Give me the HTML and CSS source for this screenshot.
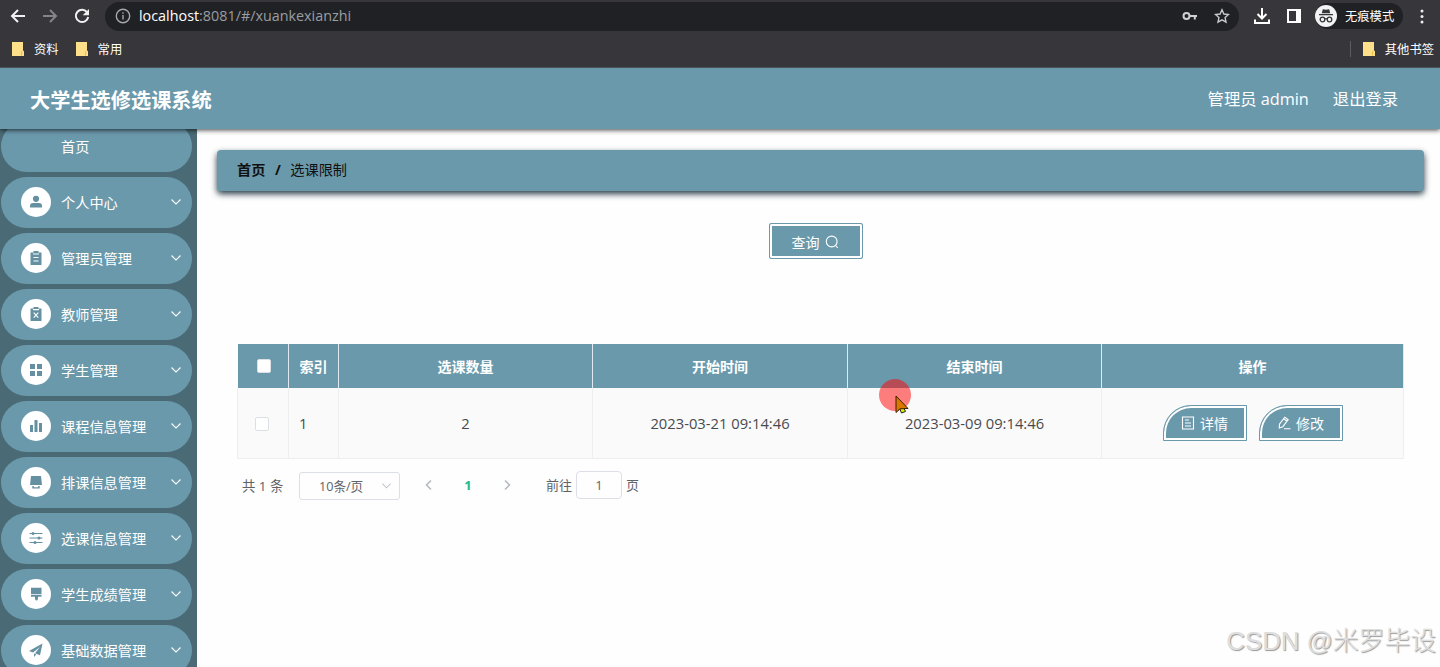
FILE: index.html
```html
<!DOCTYPE html>
<html lang="zh-CN">
<head>
<meta charset="utf-8">
<title>大学生选修选课系统</title>
<link rel="stylesheet" href="styles.css">
</head>
<body>
<svg class="defs" width="0" height="0"><defs>
<symbol id="down" viewBox="0 0 12 12"><path d="M1.500 3.500 6 8l4.500-4.500" fill="none" stroke="currentColor" stroke-width="1.100"/></symbol>
<symbol id="folder" viewBox="0 0 12 14"><path d="M0 0h11v9h1v5H0z" fill="#ffe08a"/><path d="M9.500 13.500V10l1.500-1.500" fill="none" stroke="#e9bd4c"/></symbol>
</defs></svg>
<div class="browser">
  <div class="toolbar">
    <svg class="nav" viewBox="0 0 16 16"><path d="M15 8H2M8 2 2 8l6 6" /></svg>
    <svg class="nav dim" viewBox="0 0 16 16"><path d="M1 8h13M8 2l6 6-6 6" /></svg>
    <svg class="nav" viewBox="0 0 16 16"><path d="M13.300 4.500A6.200 6.200 0 1 0 14.200 9"/><path class="solid" d="M15 1v6.300H8.700z"/></svg>
    <div class="address">
      <svg class="info" viewBox="0 0 16 16"><circle cx="8" cy="8" r="6.700"/><path d="M8 7v4.500M8 4.200v1.600"/></svg>
      <span class="url"><b>localhost</b>:8081/#/xuankexianzhi</span>
      <svg class="key" viewBox="0 0 16 12"><circle cx="4.500" cy="6" r="3"/><path d="M7.500 6H15M12.800 6v3.500"/></svg>
      <svg class="star" viewBox="0 0 16 16"><path d="m8 1.800 1.900 4.200 4.600.5-3.400 3.100.9 4.500L8 11.800l-4 2.300.9-4.500L1.500 6.500 6.100 6z"/></svg>
    </div>
    <svg class="download" viewBox="0 0 18 18"><path d="M9 1v10M4.500 7 9 11.500 13.500 7M2 12.500V16h14v-3.500"/></svg>
    <svg class="panel" viewBox="0 0 14 14"><path d="M1 1h12v12H1z" fill="none" stroke="#fff" stroke-width="2"/><path d="M9 1h4v12H9z" fill="#fff"/></svg>
    <div class="incognito">
      <svg viewBox="0 0 22 22"><circle cx="11" cy="11" r="11" fill="#f1f3f4"/><path d="m6.800 8.200 1-4 3.200.6 3.200-.6 1 4zM4 9h14v1.200H4z" fill="#35363a"/><g fill="none" stroke="#35363a" stroke-width="1.300"><circle cx="7.500" cy="14.500" r="2.300"/><circle cx="14.500" cy="14.500" r="2.300"/><path d="M9.800 14q1.200-.8 2.400 0"/></g></svg>
      <span>无痕模式</span>
    </div>
    <svg class="dots" viewBox="0 0 4 16"><circle cx="2" cy="3" r="1.500"/><circle cx="2" cy="8.500" r="1.500"/><circle cx="2" cy="14" r="1.500"/></svg>
  </div>
  <div class="bookmarks">
    <span class="mark"><svg><use href="#folder"/></svg>资料</span>
    <span class="mark"><svg><use href="#folder"/></svg>常用</span>
    <span class="mark other"><svg><use href="#folder"/></svg>其他书签</span>
  </div>
</div>
<header class="header">
  <h1>大学生选修选课系统</h1>
  <nav><span>管理员 admin</span><span>退出登录</span></nav>
</header>
<div class="layout">
  <aside class="sidebar">
    <div class="item home"><span class="label">首页</span></div>
    <div class="item"><span class="icon"><svg viewBox="0 0 14 14"><circle cx="7" cy="3.800" r="3.100"/><path d="M1 12.500V11q0-3 3-3h6q3 0 3 3v1.500z"/></svg></span><span class="label">个人中心</span><svg class="arrow"><use href="#down"/></svg></div>
    <div class="item"><span class="icon"><svg viewBox="0 0 14 14"><path d="M1.500 1.500h11V14h-11z"/><path d="M4.500 0h5v3h-5z"/><path class="cut" d="M4 3h6M4.500 6.500h5M4.500 10h5"/></svg></span><span class="label">管理员管理</span><svg class="arrow"><use href="#down"/></svg></div>
    <div class="item"><span class="icon"><svg viewBox="0 0 14 14"><path d="M1.500 1.500h11V14h-11z"/><path d="M4.500 0h5v2h-5z"/><path class="cut" d="M4 2.600h6M4.700 5.700l4.600 5M9.300 5.700l-4.600 5"/></svg></span><span class="label">教师管理</span><svg class="arrow"><use href="#down"/></svg></div>
    <div class="item"><span class="icon"><svg viewBox="0 0 14 14"><path d="M1 1h5v5H1zM8 1h5v5H8zM1 8h5v5H1zM8 8h5v5H8z"/></svg></span><span class="label">学生管理</span><svg class="arrow"><use href="#down"/></svg></div>
    <div class="item"><span class="icon"><svg viewBox="0 0 14 14"><path d="M1 6h3v7H1zM5.500 1h3v12h-3zM10 4h3v9h-3z"/></svg></span><span class="label">课程信息管理</span><svg class="arrow"><use href="#down"/></svg></div>
    <div class="item"><span class="icon"><svg viewBox="0 0 14 14"><path d="M2 1h10l1 9H1zM3.300 11h1.500v1.200h4.400V11h1.500v2.500H3.300z"/></svg></span><span class="label">排课信息管理</span><svg class="arrow"><use href="#down"/></svg></div>
    <div class="item"><span class="icon"><svg viewBox="0 0 14 14"><path d="M.5 2h13v1H.5zM.5 6.500h13v1H.5zM.5 11h13v1H.5z"/><circle cx="4" cy="2.500" r="1.500"/><circle cx="10" cy="7" r="1.500"/><circle cx="6" cy="11.500" r="1.500"/></svg></span><span class="label">选课信息管理</span><svg class="arrow"><use href="#down"/></svg></div>
    <div class="item"><span class="icon"><svg viewBox="0 0 14 14"><path d="M2 .7h10.500v6.600H2zM2 8h10.500v1.700H9V12q-1.500 3-3 0V9.700H2z"/></svg></span><span class="label">学生成绩管理</span><svg class="arrow"><use href="#down"/></svg></div>
    <div class="item"><span class="icon"><svg viewBox="0 0 14 14"><path d="M13.500.5 0 8l4 1.500L11 4 6 10.200l5 2zM5 10.500V14l2.300-2.600z"/></svg></span><span class="label">基础数据管理</span><svg class="arrow"><use href="#down"/></svg></div>
  </aside>
  <main class="main">
    <div class="crumbs"><b>首页</b><b class="slash">/</b><span>选课限制</span></div>
    <div class="search"><button class="query">查询<svg viewBox="0 0 14 14"><circle cx="6.700" cy="6.500" r="5.400"/><path d="m10.500 10.500 2.300 2.500"/></svg></button></div>
    <div class="table">
      <div class="row head"><div><i class="check"></i></div><div>索引</div><div>选课数量</div><div>开始时间</div><div>结束时间</div><div>操作</div></div>
      <div class="row body"><div><i class="check"></i></div><div class="index">1</div><div>2</div><div>2023-03-21 09:14:46</div><div>2023-03-09 09:14:46</div>
        <div class="ops">
          <button class="leaf"><svg viewBox="0 0 14 14"><path d="M1.500 1h11v12h-11zM4 4h4M4 7h6M4 10h6"/></svg>详情</button>
          <button class="leaf"><svg viewBox="0 0 14 14"><path d="m2.500 8.200 5.300-7 3.400 2.500-5.400 7-3.500 1.200zM6.700 2.800l3.300 2.500M7 12.800h6.500"/></svg>修改</button>
        </div>
      </div>
    </div>
    <div class="pager">
      <span class="total">共 1 条</span>
      <span class="size"><span>10条/页</span><svg><use href="#down"/></svg></span>
      <svg class="step" viewBox="0 0 12 12"><path d="M8 1.500 3.500 6 8 10.500"/></svg>
      <b>1</b>
      <svg class="step" viewBox="0 0 12 12"><path d="M4 1.500 8.500 6 4 10.500"/></svg>
      <span class="goto">前往</span><span class="page">1</span><span class="unit">页</span>
    </div>
  </main>
</div>
<svg class="pointer" viewBox="0 0 34 38"><circle cx="17" cy="17" r="16" fill="#ff0000" fill-opacity=".5"/><path d="m21.500 30 2 5 4-1.500-2.500-5" fill="#d8f000" stroke="#222"/><path d="M18 18v16.500l4-3.700 8-.3z" fill="#d97700" stroke="#3c1c00"/></svg>
<div class="watermark">CSDN @米罗毕设</div>
</body>
</html>
```
FILE: styles.css
```css
* { box-sizing: border-box; }
body { margin: 0; width: 1440px; height: 667px; overflow: hidden; position: relative; display: flex; flex-direction: column; background: #fefefe; font: 14px "Open Sans", "Noto Sans CJK SC", sans-serif; color: #505256; }
svg { flex: none; }
.defs { position: absolute; }
button { font: inherit; }

.browser { height: 68px; flex: none; background: #36363b; color: #fff; border-bottom: 1px solid #4c5359; }
.toolbar { height: 32px; display: flex; align-items: center; padding-left: 10px; }
.nav { width: 16px; height: 16px; margin-right: 16px; fill: none; stroke: #f1f1f1; stroke-width: 2; }
.nav.dim { stroke: #858589; }
.nav .solid { fill: #f1f1f1; stroke: none; }
.address { width: 1134px; height: 29px; margin-left: -1px; border-radius: 15px; background: #202124; display: flex; align-items: center; padding: 0 9px 0 10px; }
.info { width: 16px; height: 16px; fill: none; stroke: #a5a8ac; stroke-width: 1.4; }
.url { margin-left: 8px; flex: 1; font-size: 14.35px; color: #9a9da1; white-space: nowrap; padding-bottom: 1px; }
.url b { font-weight: 400; color: #fff; }
.key { width: 16px; height: 12px; fill: none; stroke: #cfd1d4; stroke-width: 2; margin-right: 16px; }
.star { width: 16px; height: 16px; fill: none; stroke: #c8cacd; stroke-width: 1.4; }
.download { width: 18px; height: 18px; margin-left: 14px; fill: none; stroke: #fff; stroke-width: 2; }
.panel { width: 14px; height: 14px; margin-left: 16px; }
.incognito { display: flex; align-items: center; width: 88px; height: 26px; margin-left: 14px; border-radius: 13px; background: #202124; font-size: 12.3px; }
.incognito svg { width: 22px; height: 22px; margin: 0 8px 0 0; }
.dots { width: 4px; height: 16px; margin-left: 17px; fill: #eee; }
.bookmarks { height: 34px; display: flex; align-items: center; padding: 0 6px 0 12px; font-size: 12.3px; }
.mark { display: flex; align-items: center; height: 16px; margin-right: 17px; }
.mark svg { width: 12px; height: 14px; margin-right: 10px; }
.mark.other { margin: 0 0 0 auto; border-left: 1px solid #5b5c60; padding-left: 12px; }

.header { height: 61px; flex: none; position: relative; z-index: 2; background: #6b99ac; box-shadow: 0 1px 5px rgba(0,0,0,.75); display: flex; align-items: center; justify-content: space-between; padding: 0 42px 0 30px; color: #fff; }
.browser { position: relative; z-index: 3; }
.header h1 { margin: 0; font-size: 20.2px; line-height: 30px; font-weight: 700; padding-top: 3px; }
.header nav { display: flex; gap: 24px; font-size: 16.3px; padding-bottom: 2px; }

.layout { flex: 1; min-height: 0; display: flex; }
.sidebar { width: 197px; flex: none; background: #4a6b75; padding: 0 5px 0 1px; display: flex; flex-direction: column; gap: 5px; overflow: hidden; }
.item { height: 51px; flex: none; border-radius: 26px; background: #6b99ac; color: #fff; display: flex; align-items: center; padding: 0 10px 1px 20px; font-size: 14.2px; }
.item.home { margin-top: -8px; padding-left: 60px; }
.icon { width: 30px; height: 30px; border-radius: 50%; background: #fff; display: flex; align-items: center; justify-content: center; margin-right: 10px; }
.icon svg { width: 14px; height: 14px; fill: #6490a2; }
.icon .cut { stroke: #fff; stroke-width: 1.2; fill: none; }
.label { flex: 1; white-space: nowrap; padding-bottom: 1px; }
.arrow { width: 12px; height: 12px; }

.main { flex: 1; padding: 21px 16px 0 20px; }
.crumbs { height: 41px; border-radius: 4px; background: #6b99ac; box-shadow: 0 3px 6px rgba(30,50,60,.95); color: #101010; display: flex; align-items: center; padding: 0 0 3px 20px; font-size: 14.2px; }
.crumbs .slash { margin: 0 9.500px; }
.search { display: flex; justify-content: center; padding: 32px 9px 0 0; }
.query { width: 94px; height: 36px; display: flex; align-items: center; justify-content: center; gap: 5px; padding: 2px 2px 0 0; border: 1px solid #6b99ac; border-radius: 2px; background: #6b99ac; box-shadow: inset 0 0 0 2px #fff; color: #fff; }
.query svg { width: 14px; height: 14px; fill: none; stroke: #fff; stroke-width: 1.1; }

.table { width: 1166px; margin: 85px 0 0 21px; }
.row { display: grid; grid-template-columns: 51px 50px 254px 255px 254px 302px; }
.row > div { display: flex; align-items: center; justify-content: center; border-right: 1px solid #edeff1; }
.head { height: 44px; color: #fff; font-weight: 700; }
.head > div { background: #6b99ac; background-clip: padding-box; border-right-color: #dfeaf0; padding-bottom: 1px; }
.body { height: 71px; background: #fafafa; color: #484a4e; font-size: 14.75px; border-bottom: 1px solid #ebeef0; box-shadow: -1px 0 #f0edf0; }
.body .index { justify-content: flex-start; padding-left: 10px; }
.check { width: 14px; height: 14px; border-radius: 2px; background: #fff; border: 1px solid #dcdfe6; }
.head .check { margin: 1px 0 0 1px; }
.body .check { margin: 1px 3px 0 0; }
.body .ops { gap: 12px; font-size: 14px; }
.leaf { width: 84px; height: 36px; display: flex; align-items: center; justify-content: center; gap: 5px; padding: 0; border: 1px solid #6b99ac; border-radius: 28px 0 0 0; background: #6b99ac; box-shadow: inset 0 0 0 2px #fff; color: #fff; }
.leaf svg { width: 14px; height: 14px; fill: none; stroke: #fff; stroke-width: 1.1; }

.pager { display: flex; align-items: center; height: 28px; margin: 13px 0 0 25px; font-size: 13px; color: #606266; white-space: nowrap; }
.total { width: 57px; font-size: 13.4px; padding-bottom: 3px; }
.size { width: 101px; height: 28px; display: flex; align-items: center; justify-content: space-between; padding: 0 7px 0 19px; border: 1px solid #dcdfe6; border-radius: 3px; font-size: 12.6px; }
.size > span { padding-bottom: 2px; }
.size svg { width: 11px; height: 12px; color: #bfc3cb; }
.step { width: 12px; height: 12px; margin: 0 23px; position: relative; top: -1px; fill: none; stroke: #b3b7bf; stroke-width: 1.5; }
.pager b { width: 20px; text-align: center; color: #25b98b; padding-bottom: 2px; }
.goto { margin-left: 10px; }
.goto, .unit { padding-bottom: 3px; }
.page { width: 46px; height: 28px; margin: -2px 4px 0; border: 1px solid #dcdfe6; border-radius: 4px; display: flex; align-items: center; justify-content: center; }

.pointer { position: absolute; left: 878px; top: 378px; width: 34px; height: 38px; z-index: 5; }
.watermark { position: absolute; right: 4px; top: 622px; z-index: 5; font: 25.8px/38px "Liberation Sans", "Noto Sans CJK SC", sans-serif; font-weight: 300; color: #dedede; text-shadow: 1px 1px 1px #999; white-space: nowrap; }
```
